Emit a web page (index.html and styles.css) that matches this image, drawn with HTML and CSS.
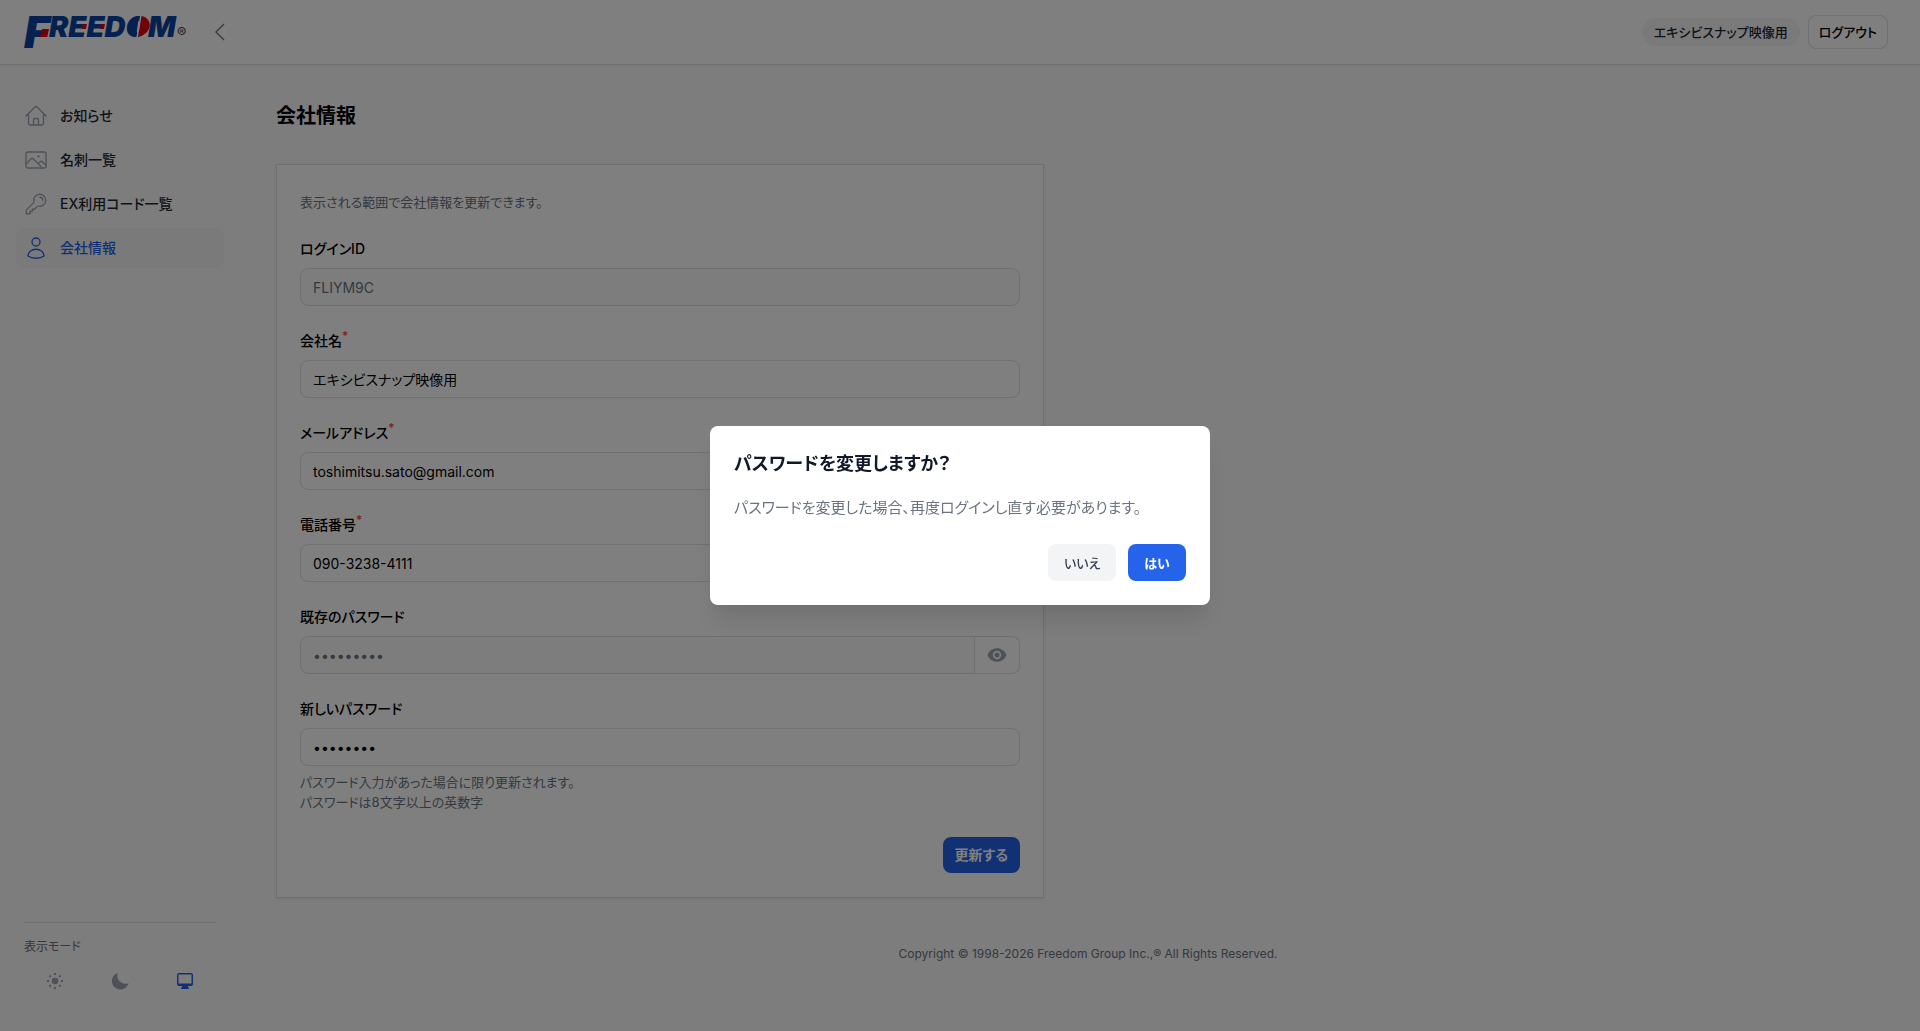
FILE: index.html
```html
<!DOCTYPE html>
<html lang="ja">

<head>
    <meta charset="UTF-8">
    <meta name="viewport" content="width=device-width, initial-scale=1.0">
    <title>会社情報</title>
    <link rel="stylesheet" href="styles.css">
</head>

<body>
    <header class="header">
        <div class="header-left">
            <a href="#" class="logo" aria-label="FREEDOM">
                <svg width="168" height="56" viewBox="0 -10 168 56">
                    <text class="logo-text" x="0" y="34" font-size="44">F</text>
                    <text class="logo-text" x="25" y="23" font-size="29">REEDOM</text>
                    <path d="M18 15h7l-2 8h-7z" fill="#e60012" />
                    <path d="M59 10h4l-1 5h-4z" fill="#e60012" />
                    <path d="M77 10h4l-1 5h-4z" fill="#e60012" />
                    <path d="M115 2C101 3 101 22 112 23z" fill="#0b43a0" />
                    <path d="M117 2C130 4 128 20 114 23z" fill="#e60012" />
                    <path d="M117 1 113 24" stroke="#fff" stroke-width="1.500" />
                    <text class="logo-mark" x="153" y="24" font-size="14">®</text>
                </svg>
            </a>
            <button type="button" class="collapse" aria-label="メニューを閉じる">
                <svg width="12" height="18" viewBox="0 0 12 18"><path d="M10 1 2 9l8 8" /></svg>
            </button>
        </div>
        <div class="header-right">
            <span class="company">エキシビスナップ映像用</span>
            <button type="button" class="logout">ログアウト</button>
        </div>
    </header>

    <div class="layout">
        <aside class="sidebar">
            <nav class="nav">
                <a href="#" class="nav-item">
                    <svg class="icon" viewBox="0 0 24 24"><path d="M2 12 10.900 3Q12 2 13.100 3L22 12M4.500 10v9.500Q4.500 21 6 21h12q1.500 0 1.500-1.500V10M9.500 21v-5q0-1.500 1.500-1.500h2q1.500 0 1.500 1.500v5" /></svg>
                    お知らせ
                </a>
                <a href="#" class="nav-item">
                    <svg class="icon" viewBox="0 0 24 24"><rect x="2" y="4" width="20" height="16" rx="1.500" /><path d="m2 16 5.200-5.200q1-1 2 0l7.800 7.800M14.500 15.500l1.700-1.700q1-1 2 0L22 17" /><circle cx="14.500" cy="8.300" r=".5" /></svg>
                    名刺一覧
                </a>
                <a href="#" class="nav-item">
                    <svg class="icon" viewBox="0 0 24 24"><path d="M15.750 5.250a3 3 0 0 1 3 3m3 0a6 6 0 0 1-7.029 5.912c-.563-.097-1.159.026-1.563.430L10.500 17.250H8.250v2.250H6v2.250H2.250v-2.818c0-.597.237-1.170.659-1.591l6.499-6.499c.404-.404.527-1 .43-1.563A6 6 0 1 1 21.750 8.250Z" /></svg>
                    EX利用コード一覧
                </a>
                <a href="#" class="nav-item active">
                    <svg class="icon" viewBox="0 0 24 24"><circle cx="12" cy="6" r="4" /><path d="M4 20c0-9 16-9 16 0-4 3-12 3-16 0Z" /></svg>
                    会社情報
                </a>
            </nav>
            <div class="mode">
                <p class="mode-label">表示モード</p>
                <div class="mode-list">
                    <button type="button" class="mode-btn" aria-label="ライト">
                        <svg width="20" height="20" viewBox="0 0 20 20"><circle cx="10" cy="10" r="3.200" fill="currentColor" /><path d="M10 2v2M10 16v2M2 10h2M16 10h2M4.500 4.500l1.300 1.300M14.200 14.200l1.300 1.300M4.500 15.500l1.300-1.300M14.200 5.800l1.300-1.300" stroke="currentColor" stroke-width="1.900" /></svg>
                    </button>
                    <button type="button" class="mode-btn" aria-label="ダーク">
                        <svg width="20" height="20" viewBox="0 0 20 20"><path d="M7.600 2a8.500 8.500 0 1 0 11 10.200A8.400 8.400 0 0 1 7.600 2Z" fill="currentColor" /></svg>
                    </button>
                    <button type="button" class="mode-btn selected" aria-label="システム">
                        <svg width="20" height="20" viewBox="0 0 20 20"><path d="M4 2h12a2 2 0 0 1 2 2v9a2 2 0 0 1-2 2h-3v1l1 1v1H6v-1l1-1v-1H4a2 2 0 0 1-2-2V4a2 2 0 0 1 2-2Zm-.5 1.500v9h13v-9Z" fill="currentColor" fill-rule="evenodd" /></svg>
                    </button>
                </div>
            </div>
        </aside>

        <div class="content">
            <main class="main">
                <h1 class="title">会社情報</h1>
                <form class="card" action="">
                    <p class="lead">表示される範囲で会社情報を更新できます。</p>
                    <div class="field">
                        <label for="login-id">ログインID</label>
                        <input type="text" id="login-id" value="FLIYM9C" disabled>
                    </div>
                    <div class="field">
                        <label for="company">会社名<sup>*</sup></label>
                        <input type="text" id="company" value="エキシビスナップ映像用">
                    </div>
                    <div class="field">
                        <label for="email">メールアドレス<sup>*</sup></label>
                        <input type="email" id="email" value="toshimitsu.sato@gmail.com">
                    </div>
                    <div class="field">
                        <label for="tel">電話番号<sup>*</sup></label>
                        <input type="tel" id="tel" value="090-3238-4111">
                    </div>
                    <div class="field">
                        <label for="old-password">既存のパスワード</label>
                        <div class="input-group">
                            <input type="password" id="old-password" value="123456789" disabled>
                            <button type="button" class="eye" aria-label="パスワードを表示">
                                <svg width="20" height="20" viewBox="0 0 20 20"><path d="M.5 10C3.500 1 16.500 1 19.500 10 16.500 19 3.500 19 .5 10ZM10 5.800a4.200 4.200 0 1 0 0 8.400 4.200 4.200 0 0 0 0-8.400Z" fill="currentColor" fill-rule="evenodd" /><circle cx="10" cy="10" r="2.500" fill="currentColor" /></svg>
                            </button>
                        </div>
                    </div>
                    <div class="field">
                        <label for="new-password">新しいパスワード</label>
                        <input type="password" id="new-password" value="12345678">
                        <p class="hint">パスワード入力があった場合に限り更新されます。<br>パスワードは8文字以上の英数字</p>
                    </div>
                    <div class="actions">
                        <button type="submit" class="btn-submit">更新する</button>
                    </div>
                </form>
            </main>
            <footer class="footer">Copyright © 1998-2026 Freedom Group Inc.,® All Rights Reserved.</footer>
        </div>
    </div>

    <!-- Modal -->
    <div class="overlay">
        <div class="modal" role="dialog" aria-modal="true" aria-labelledby="modal-title">
            <h2 id="modal-title">パスワードを変更しますか？</h2>
            <p>パスワードを変更した場合、再度ログインし直す必要があります。</p>
            <div class="modal-actions">
                <button type="button" class="btn-no">いいえ</button>
                <button type="button" class="btn-yes">はい</button>
            </div>
        </div>
    </div>
</body>

</html>
```
FILE: styles.css
```css
* {
    padding: 0;
    margin: 0;
    box-sizing: border-box;
}

body {
    font-family: Inter, "Noto Sans CJK JP", sans-serif;
    font-feature-settings: "palt";
    font-size: 14px;
    line-height: 20px;
    color: #000;
    background-color: #fafafa;
}

button,
input {
    font: inherit;
    font-feature-settings: inherit;
    color: inherit;
    border: none;
    background: none;
}

button {
    cursor: pointer;
}

svg {
    display: block;
    overflow: visible;
}

/* header */
.header {
    display: flex;
    justify-content: space-between;
    align-items: center;
    height: 64px;
    padding: 0 32px 0 24px;
    background-color: #fff;
    box-shadow: 0 1px 0 #dfe0e2, 0 2px 2px rgba(0, 0, 0, 0.04);
}

.header-left {
    display: flex;
    align-items: center;
    gap: 22px;
}

.logo-text {
    font-family: Inter, sans-serif;
    font-weight: 900;
    font-style: italic;
    fill: #0b43a0;
}

.logo-mark {
    fill: #374151;
}

.collapse path {
    fill: none;
    stroke: #6b7280;
    stroke-width: 1.3;
}

.header-right {
    display: flex;
    align-items: center;
    gap: 8px;
    font-size: 13px;
}

.company {
    padding: 4px 12px;
    border-radius: 14px;
    background-color: #f4f4f5;
    color: #1f2937;
    font-weight: 500;
}

.logout {
    padding: 6px 10px;
    border: 1px solid #dfe0e2;
    border-radius: 8px;
    font-weight: 500;
}

/* layout */
.layout {
    display: grid;
    grid-template-columns: 256px 1fr;
    min-height: calc(100vh - 64px);
}

.sidebar {
    display: flex;
    flex-direction: column;
    justify-content: space-between;
    padding: 32px 32px 32px 16px;
}

.nav {
    display: flex;
    flex-direction: column;
    gap: 4px;
}

.nav-item {
    display: flex;
    align-items: center;
    gap: 12px;
    height: 40px;
    padding: 0 8px;
    border-radius: 8px;
    color: #1f2937;
    font-weight: 500;
    text-decoration: none;
}

.icon {
    width: 24px;
    height: 24px;
    fill: none;
    stroke: #9ca3af;
    stroke-width: 1.3;
    stroke-linejoin: round;
    stroke-linecap: round;
}

.nav-item.active {
    background-color: #f4f4f5;
    color: #2563eb;
}

.nav-item.active .icon {
    stroke: #2563eb;
}

.mode {
    margin: 0 8px;
    padding-top: 16px;
    border-top: 1px solid #dfe0e2;
}

.mode-label {
    margin-bottom: 8px;
    font-size: 12px;
    line-height: 16px;
    color: #6b7280;
}

.mode-list {
    display: grid;
    grid-template-columns: repeat(3, 1fr);
    gap: 4px;
}

.mode-btn {
    display: flex;
    justify-content: center;
    align-items: center;
    height: 36px;
    color: #9ca3af;
}

.mode-btn.selected {
    color: #2563eb;
}

.content {
    display: flex;
    flex-direction: column;
}

.main {
    padding: 38px 20px 48px;
}

.title {
    margin-bottom: 34px;
    font-size: 20px;
    line-height: 28px;
    font-weight: 700;
}

/* form */
.card {
    max-width: 768px;
    padding: 28px 24px 25px;
    background-color: #fff;
    box-shadow: inset 0 0 0 1px #dfe0e2, 0 1px 3px rgba(0, 0, 0, 0.08);
}

.lead {
    margin-bottom: 27px;
    font-size: 13px;
    color: #6b7280;
}

.field {
    margin-bottom: 25px;
}

.field label {
    display: block;
    margin-bottom: 9px;
    font-weight: 500;
}

.field sup {
    color: #ef4444;
    font-size: 12px;
    line-height: 0;
}

.field input {
    display: block;
    width: 100%;
    height: 38px;
    padding: 0 12px;
    border: 1px solid #dfe0e2;
    border-radius: 8px;
    background-color: #fff;
}

.field input:disabled {
    background-color: #fafafa;
    color: #6b7280;
}

.input-group {
    display: flex;
}

.input-group input {
    flex: 1;
    border-radius: 8px 0 0 8px;
}

.eye {
    display: flex;
    justify-content: center;
    align-items: center;
    width: 45px;
    border: 1px solid #dfe0e2;
    border-left: none;
    border-radius: 0 8px 8px 0;
    color: #9ca3af;
}

.hint {
    margin-top: 6px;
    font-size: 13px;
    color: #6b7280;
}

.actions {
    display: flex;
    justify-content: flex-end;
}

.btn-submit {
    padding: 8px 12px;
    border-radius: 8px;
    background-color: #2563eb;
    color: #fff;
    font-weight: 700;
}

.footer {
    text-align: center;
    font-size: 12px;
    line-height: 16px;
    color: #6b7280;
}

/* modal */
.overlay {
    position: fixed;
    inset: 0;
    display: flex;
    justify-content: center;
    align-items: center;
    background-color: rgba(0, 0, 0, 0.5);
}

.modal {
    width: 500px;
    max-width: 100%;
    padding: 24px;
    border-radius: 8px;
    background-color: #fff;
    box-shadow: 0 20px 24px -4px rgba(0, 0, 0, 0.1), 0 8px 8px -4px rgba(0, 0, 0, 0.04);
}

.modal h2 {
    margin-bottom: 18px;
    font-size: 18px;
    line-height: 28px;
    font-weight: 700;
    color: #111827;
}

.modal p {
    margin-bottom: 24px;
    font-size: 15px;
    line-height: 24px;
    color: #6b7280;
}

.modal-actions {
    display: flex;
    justify-content: flex-end;
    gap: 12px;
    font-size: 13px;
}

.btn-no,
.btn-yes {
    height: 37px;
    padding: 0 16px;
    border-radius: 8px;
    font-weight: 500;
}

.btn-no {
    background-color: #f3f4f6;
    color: #374151;
}

.btn-yes {
    background-color: #2563eb;
    color: #fff;
    font-weight: 700;
}
```
